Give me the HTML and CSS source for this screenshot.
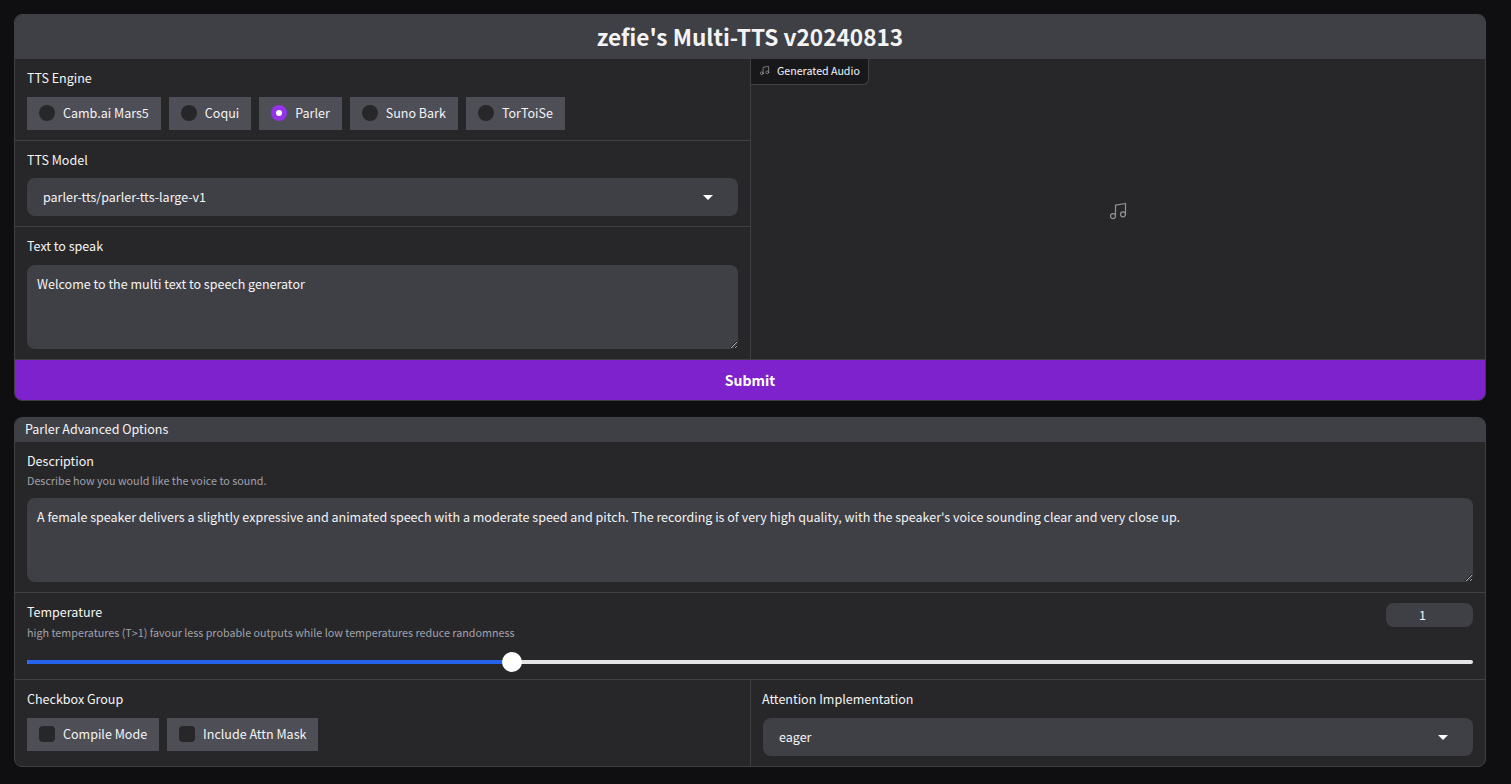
FILE: index.html
```html
<!DOCTYPE html>
<html lang="en">
<head>
  <meta charset="UTF-8">
  <title>zefie's Multi-TTS</title>
  <link rel="stylesheet" href="styles.css">
</head>
<body>
  <div class="panel main-panel">
    <h1 class="title">zefie's Multi-TTS v20240813</h1>
    <div class="cols">
      <div class="col col-left">
        <div class="block block-engine">
          <div class="label">TTS Engine</div>
          <div class="chips">
            <label class="chip"><span class="radio"></span>Camb.ai Mars5</label>
            <label class="chip"><span class="radio"></span>Coqui</label>
            <label class="chip"><span class="radio checked"></span>Parler</label>
            <label class="chip"><span class="radio"></span>Suno Bark</label>
            <label class="chip"><span class="radio"></span>TorToiSe</label>
          </div>
        </div>
        <div class="block block-model">
          <div class="label">TTS Model</div>
          <div class="select">
            <span>parler-tts/parler-tts-large-v1</span>
            <span class="caret"></span>
          </div>
        </div>
        <div class="block block-text">
          <div class="label">Text to speak</div>
          <textarea class="textbox" spellcheck="false">Welcome to the multi text to speech generator</textarea>
        </div>
      </div>
      <div class="col col-audio">
        <div class="audio-tag">
          <svg class="note note-small" viewBox="0 0 24 24"><path d="M9 18V5l12-2v13"/><circle cx="6" cy="18" r="3"/><circle cx="18" cy="16" r="3"/></svg>
          Generated Audio
        </div>
        <svg class="note note-big" viewBox="0 0 24 24"><path d="M9 18V5l12-2v13"/><circle cx="6" cy="18" r="3"/><circle cx="18" cy="16" r="3"/></svg>
      </div>
    </div>
    <button class="submit">Submit</button>
  </div>

  <div class="panel options-panel">
    <div class="options-head">Parler Advanced Options</div>
    <div class="block block-desc">
      <div class="label">Description</div>
      <div class="info">Describe how you would like the voice to sound.</div>
      <textarea class="textbox" spellcheck="false">A female speaker delivers a slightly expressive and animated speech with a moderate speed and pitch. The recording is of very high quality, with the speaker's voice sounding clear and very close up.</textarea>
    </div>
    <div class="block block-temp">
      <div class="temp-head">
        <div>
          <div class="label">Temperature</div>
          <div class="info">high temperatures (T&gt;1) favour less probable outputs while low temperatures reduce randomness</div>
        </div>
        <div class="number">1</div>
      </div>
      <div class="slider">
        <div class="slider-fill"></div>
        <div class="slider-thumb"></div>
      </div>
    </div>
    <div class="cols bottom-cols">
      <div class="col col-left block block-check">
        <div class="label">Checkbox Group</div>
        <div class="chips">
          <label class="chip"><span class="check"></span>Compile Mode</label>
          <label class="chip"><span class="check"></span>Include Attn Mask</label>
        </div>
      </div>
      <div class="col block block-attn">
        <div class="label">Attention Implementation</div>
        <div class="select">
          <span>eager</span>
          <span class="caret"></span>
        </div>
      </div>
    </div>
  </div>
</body>
</html>
```

FILE: styles.css
```css
* {
  box-sizing: border-box;
}

html, body {
  height: 100%;
}

body {
  margin: 0;
  padding: 14px 25px 0 14px;
  background-color: #0f0f11;
  color: #f4f4f5;
  font-family: "Noto Sans CJK SC", "Open Sans", sans-serif;
  font-size: 12.53px;
  line-height: 20px;
  overflow: hidden;
}

.panel {
  border: 1px solid #3f3f46;
  border-radius: 8px;
  background-color: #27272a;
  overflow: hidden;
}

.main-panel {
  height: 387px;
}

.options-panel {
  height: 350px;
  margin-top: 16px;
}

.title {
  margin: 0;
  height: 44px;
  background-color: #3f4046;
  font-size: 22.6px;
  line-height: 44px;
  font-weight: 600;
  text-align: center;
}

.cols {
  display: grid;
  grid-template-columns: 736px 1fr;
}

.col-left {
  border-right: 1px solid #3f3f46;
}

.col-audio {
  position: relative;
  height: 300px;
  display: flex;
  align-items: center;
  justify-content: center;
}

.block {
  padding: 9px 12px;
  border-bottom: 1px solid #3f3f46;
}

.block-engine {
  height: 82px;
}

.block-model {
  height: 86px;
}

.block-model .label {
  margin-bottom: 8px;
}

.block-text {
  height: 132px;
  border-bottom: none;
}

.label {
  margin-bottom: 9px;
  height: 20px;
}

.chips {
  display: flex;
  gap: 8px;
}

.chip {
  display: flex;
  align-items: center;
  height: 33px;
  padding: 0 12px 1px;
  background-color: #4e4e57;
  white-space: nowrap;
}

.radio {
  width: 16px;
  height: 16px;
  margin-right: 8px;
  border-radius: 50%;
  background-color: #27272a;
}

.radio.checked {
  background-color: #9333ea;
  position: relative;
}

.radio.checked::after {
  content: "";
  position: absolute;
  left: 5px;
  top: 5px;
  width: 6px;
  height: 6px;
  border-radius: 50%;
  background-color: #fff;
}

.check {
  width: 16px;
  height: 16px;
  margin-right: 8px;
  border-radius: 4px;
  background-color: #27272a;
}

.select {
  display: flex;
  align-items: center;
  justify-content: space-between;
  height: 38px;
  padding: 0 25px 0 16px;
  border-radius: 8px;
  background-color: #3f4046;
}

.caret {
  width: 0;
  height: 0;
  border-left: 5px solid transparent;
  border-right: 5px solid transparent;
  border-top: 5px solid #fff;
}

.textbox {
  display: block;
  width: 100%;
  height: 84px;
  padding: 9px 10px;
  border: none;
  border-radius: 8px;
  outline: none;
  background-color: #3f4046;
  color: #f4f4f5;
  font: inherit;
  resize: vertical;
}

.submit {
  display: block;
  width: 100%;
  height: 41px;
  border: none;
  border-top: 1px solid #3f3f46;
  background-color: #7e22ce;
  color: #fff;
  font: inherit;
  font-size: 14px;
  font-weight: 600;
}

.audio-tag {
  position: absolute;
  left: 0;
  top: 0;
  display: flex;
  align-items: center;
  height: 26px;
  padding: 0 8px 2px;
  background-color: #18181b;
  border-right: 1px solid #3f3f46;
  border-bottom: 1px solid #3f3f46;
  border-bottom-right-radius: 6px;
  font-size: 10.65px;
  white-space: nowrap;
}

.note {
  fill: none;
  stroke: #a1a1aa;
  stroke-width: 1.5;
  stroke-linecap: round;
  stroke-linejoin: round;
}

.note-small {
  width: 11px;
  height: 11px;
  margin-right: 7px;
}

.note-big {
  width: 20px;
  height: 20px;
  margin-top: 4px;
  stroke: #8f8f96;
}

.options-head {
  height: 24px;
  padding-left: 10px;
  background-color: #3f4046;
  line-height: 22px;
}

.info {
  margin-top: -1px;
  color: #a1a1aa;
  font-size: 10.75px;
  line-height: 16px;
}

.block-desc {
  height: 151px;
}

.block-desc .label {
  margin-bottom: 3px;
}

.block-desc .info {
  margin-bottom: 9px;
}

.block-temp {
  height: 87px;
}

.temp-head {
  display: flex;
  justify-content: space-between;
}

.temp-head .label {
  margin-bottom: 4px;
}

.number {
  width: 87px;
  height: 24px;
  margin-top: 1px;
  padding-right: 14px;
  border-radius: 8px;
  background-color: #3f4046;
  line-height: 24px;
  text-align: center;
}

.slider {
  position: relative;
  height: 4px;
  margin-top: 19px;
  border-radius: 2px;
  background-color: #e4e4e7;
}

.slider-fill {
  width: 33.55%;
  height: 100%;
  border-radius: 2px 0 0 2px;
  background-color: #2563eb;
}

.slider-thumb {
  position: absolute;
  left: 33.55%;
  top: -8px;
  width: 20px;
  height: 20px;
  margin-left: -10px;
  border-radius: 50%;
  background-color: #fff;
}

.bottom-cols .block {
  height: 87px;
  border-bottom: none;
}

.block-attn .label {
  margin-left: -1px;
}
```
